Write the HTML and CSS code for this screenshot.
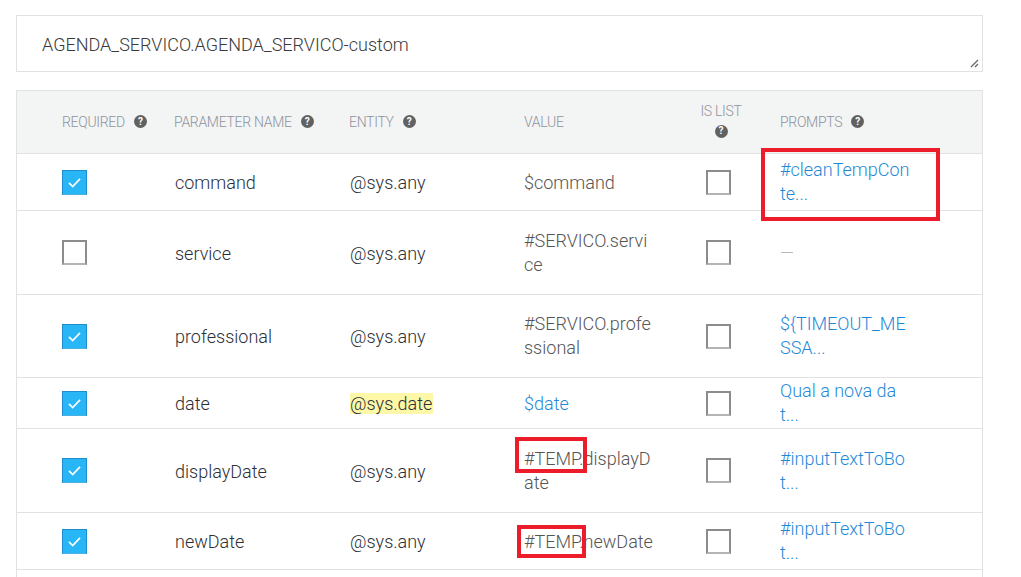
FILE: index.html
```html
<!DOCTYPE html>
<html lang="en">
<head>
<meta charset="utf-8">
<title>Parameters</title>
<link rel="stylesheet" href="styles.css">
</head>
<body>
<div class="page">
  <div class="textbox">
    <span class="textbox-text">AGENDA_SERVICO.AGENDA_SERVICO-custom</span>
    <svg class="grip" width="10" height="10" viewBox="0 0 10 10"><path d="M9 2 L2 9 M9 6 L6 9" stroke="#666" stroke-width="1.3" fill="none"/></svg>
  </div>

  <div class="table">
    <div class="row head">
      <div class="hcell">REQUIRED <span class="help">?</span></div>
      <div class="hcell">PARAMETER NAME <span class="help">?</span></div>
      <div class="hcell">ENTITY <span class="help">?</span></div>
      <div class="hcell">VALUE</div>
      <div class="hcell hcell-list">IS LIST<br><span class="help">?</span></div>
      <div class="hcell">PROMPTS <span class="help">?</span></div>
    </div>

    <div class="row h56">
      <div class="cell"><span class="cb checked"><svg viewBox="0 0 25 25"><path d="M6.5 13 L10.5 17 L18.5 8.5" stroke="#fff" stroke-width="1.8" fill="none"/></svg></span></div>
      <div class="cell name">command</div>
      <div class="cell name">@sys.any</div>
      <div class="cell value">$command</div>
      <div class="cell list"><span class="cb"></span></div>
      <div class="cell prompt">#cleanTempCon<br>te...</div>
    </div>

    <div class="row h83">
      <div class="cell"><span class="cb"></span></div>
      <div class="cell name">service</div>
      <div class="cell name">@sys.any</div>
      <div class="cell value multi">#SERVICO.servi<br>ce</div>
      <div class="cell list"><span class="cb"></span></div>
      <div class="cell prompt empty">—</div>
    </div>

    <div class="row h82">
      <div class="cell"><span class="cb checked"><svg viewBox="0 0 25 25"><path d="M6.5 13 L10.5 17 L18.5 8.5" stroke="#fff" stroke-width="1.8" fill="none"/></svg></span></div>
      <div class="cell name">professional</div>
      <div class="cell name">@sys.any</div>
      <div class="cell value multi">#SERVICO.profe<br>ssional</div>
      <div class="cell list"><span class="cb"></span></div>
      <div class="cell prompt">${TIMEOUT_ME<br>SSA...</div>
    </div>

    <div class="row h50">
      <div class="cell"><span class="cb checked"><svg viewBox="0 0 25 25"><path d="M6.5 13 L10.5 17 L18.5 8.5" stroke="#fff" stroke-width="1.8" fill="none"/></svg></span></div>
      <div class="cell name">date</div>
      <div class="cell name"><span class="mark">@sys.date</span></div>
      <div class="cell value link">$date</div>
      <div class="cell list"><span class="cb"></span></div>
      <div class="cell prompt">Qual a nova da<br>t...</div>
    </div>

    <div class="row h83">
      <div class="cell"><span class="cb checked"><svg viewBox="0 0 25 25"><path d="M6.5 13 L10.5 17 L18.5 8.5" stroke="#fff" stroke-width="1.8" fill="none"/></svg></span></div>
      <div class="cell name">displayDate</div>
      <div class="cell name">@sys.any</div>
      <div class="cell value multi">#TEMP.displayD<br>ate</div>
      <div class="cell list"><span class="cb"></span></div>
      <div class="cell prompt">#inputTextToBo<br>t...</div>
    </div>

    <div class="row h56">
      <div class="cell"><span class="cb checked"><svg viewBox="0 0 25 25"><path d="M6.5 13 L10.5 17 L18.5 8.5" stroke="#fff" stroke-width="1.8" fill="none"/></svg></span></div>
      <div class="cell name">newDate</div>
      <div class="cell name">@sys.any</div>
      <div class="cell value">#TEMP.newDate</div>
      <div class="cell list"><span class="cb"></span></div>
      <div class="cell prompt">#inputTextToBo<br>t...</div>
    </div>

    <div class="row h56"></div>
  </div>

  <div class="annot annot-1"></div>
  <div class="annot annot-2"></div>
  <div class="annot annot-3"></div>
</div>
</body>
</html>
```

FILE: styles.css
```css
* { box-sizing: border-box; }

html, body {
  margin: 0;
  padding: 0;
  background: #fff;
  overflow: hidden;
}

body {
  font-family: Roboto, "Noto Sans", "Liberation Sans", sans-serif;
  font-weight: 300;
  color: #2b2f38;
}

.page {
  position: relative;
  padding: 15px 0 0 16px;
  width: 983px;
}

.textbox {
  position: relative;
  height: 57px;
  border: 1px solid #e2e2e2;
  display: flex;
  align-items: center;
  padding: 1px 0 0 25px;
}

.textbox-text {
  font-size: 18px;
  color: #3a3a3a;
}

.grip {
  position: absolute;
  right: 3px;
  bottom: 3px;
}

.table {
  margin-top: 18px;
  border-left: 1px solid #e2e2e2;
  border-right: 1px solid #e2e2e2;
  border-top: 1px solid #e2e2e2;
}

.row {
  display: grid;
  grid-template-columns: 112px 175px 175px 175px 81px 1fr;
  padding-left: 45px;
  align-items: center;
  border-bottom: 1px solid #e2e2e2;
}

.row.head {
  height: 63px;
  background: #f3f4f4;
}

.h56 { height: 57px; }
.h83 { height: 84px; }
.h82 { height: 83px; }
.h50 { height: 51px; }

.hcell {
  font-size: 14px;
  color: #8f939d;
  letter-spacing: -0.3px;
  display: flex;
  align-items: center;
  gap: 9px;
  margin-top: -1px;
}

.hcell-list {
  display: block;
  width: 44px;
  text-align: center;
  line-height: 18px;
  margin-top: -4px;
}

.help {
  display: inline-flex;
  align-items: center;
  justify-content: center;
  width: 13px;
  height: 13px;
  border-radius: 50%;
  background: #616161;
  color: #fff;
  font-size: 10px;
  font-weight: 700;
  letter-spacing: 0;
  line-height: 1;
}

.hcell-list .help {
  margin-top: 2px;
}

.cell {
  font-size: 18px;
  line-height: 24px;
  padding-top: 2px;
}

.cell:first-child {
  padding-top: 0;
}

.name {
  padding-left: 1px;
  color: #2b2f38;
}

.value {
  color: #555;
}

.value.multi {
  padding-top: 0;
}

.value.link {
  color: #1f89d8;
}

.list {
  padding-left: 7px;
  padding-top: 0;
}

.prompt {
  color: #1f89d8;
  font-size: 18px;
  padding-top: 0;
}

.prompt.empty {
  color: #b8b8b8;
}

.mark {
  background: #fdf8a8;
  padding: 0 1px 0 0;
}

.cb {
  display: block;
  width: 25px;
  height: 25px;
  border: 2px solid #8c8c8c;
  border-bottom-color: #b4b4b4;
  background: #fff;
}

.cb.checked {
  border: 1px solid #1f8dcc;
  border-bottom-color: #4ab0e0;
  background: #29b6f6;
}

.cb svg {
  display: block;
  width: 23px;
  height: 23px;
}

.annot {
  position: absolute;
  border: 4px solid #ec1c2a;
}

.annot-1 { left: 761px; top: 148px; width: 179px; height: 73px; }
.annot-2 { left: 515px; top: 437px; width: 72px; height: 36px; }
.annot-3 { left: 517px; top: 525px; width: 69px; height: 33px; }
```
